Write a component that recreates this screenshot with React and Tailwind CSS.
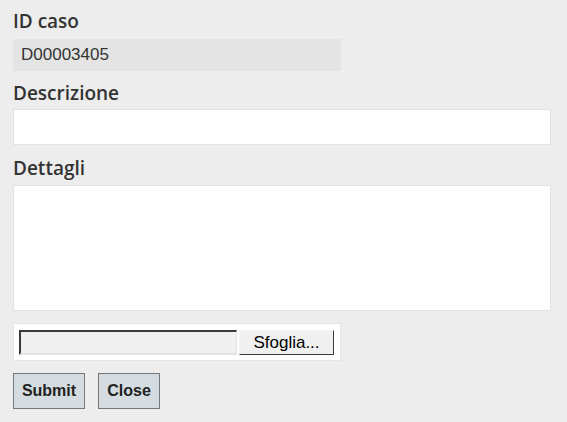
import React from 'react';

const labelCls = "block text-[19px] leading-[24px] font-semibold text-[#333] font-['Open_Sans',sans-serif]";

export default function App() {
  return (
    <div className="min-h-[422px] w-full bg-[#ededed] px-[13px] pt-[9px] pb-3 font-['Liberation_Sans',Arial,sans-serif]">
      <div className="flex flex-col">
        <label className={labelCls}>ID caso</label>
        <div className="mt-[6px] h-[32px] w-[328px] bg-[#e4e4e4] px-[8px] flex items-center text-[17px] text-[#333]">
          D00003405
        </div>

        <label className={`${labelCls} mt-[10px]`}>Descrizione</label>
        <input
          type="text"
          className="mt-[4px] h-[36px] w-[538px] border border-[#e2e2e2] bg-white outline-none"
        />

        <label className={`${labelCls} mt-[11px]`}>Dettagli</label>
        <textarea className="mt-[5px] h-[126px] w-[538px] resize-none border border-[#e2e2e2] bg-white outline-none" />

        <div className="mt-[12px] flex h-[38px] w-[328px] items-center gap-[2px] border border-[#e4e4e4] bg-white px-[5px]">
          <div className="h-[25px] w-[218px] border-t-2 border-l-2 border-b-2 border-r border-t-[#3a3a3a] border-l-[#3a3a3a] border-b-[#e3e3e3] border-r-[#e3e3e3] bg-[#f0f0f0]" />
          <button className="h-[25px] w-[95px] border border-t-[#f5f5f5] border-l-[#f5f5f5] border-r-[#3a3a3a] border-b-[#3a3a3a] bg-[#f0f0f0] text-[17px] leading-none text-black">
            Sfoglia...
          </button>
        </div>

        <div className="mt-[12px] flex gap-[13px]">
          <button className="h-[36px] w-[72px] border border-[#777] bg-[#d4dce1] text-[16px] font-bold text-[#222]">
            Submit
          </button>
          <button className="h-[36px] w-[62px] border border-[#777] bg-[#d4dce1] text-[16px] font-bold text-[#222]">
            Close
          </button>
        </div>
      </div>
    </div>
  );
}
